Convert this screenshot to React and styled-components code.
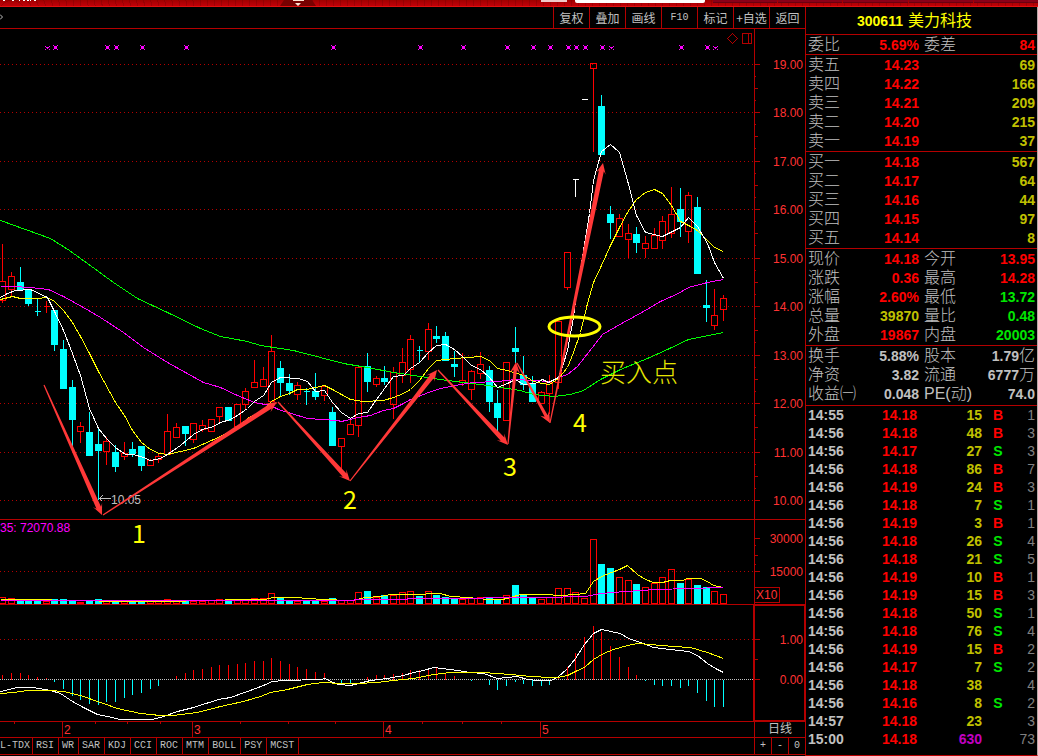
import React, { useState } from 'react'
import styled, { createGlobalStyle } from 'styled-components'

const LINE = '#b40000'
const UP = '#ff0000'
const DOWN = '#00ffff'
const GRAY = '#c0c0c0'
const YELLOW = '#ffff00'
const PINK = '#ff00ff'
const LIME = '#00ff00'

// [up/down/white, body top, body bottom, high, low, volume top, macd bar end]
const candles = [
  ['u', 281, 301, 243, 302, 597, 674],
  ['u', 276, 290, 271, 296, 598, 672],
  ['d', 282, 290, 266, 290, 601, 672],
  ['d', 289, 304, 289, 305, 601, 674],
  ['d', 311, 312, 298, 315, 601, 676],
  ['u', 306, 307, 300, 312, 601, 677],
  ['d', 310, 345, 310, 350, 599, 681],
  ['d', 349, 389, 339, 389, 599, 688],
  ['d', 387, 420, 379, 447, 600, 695],
  ['u', 426, 432, 421, 442, 602, 699],
  ['d', 432, 456, 411, 456, 600, 703],
  ['d', 444, 451, 428, 499, 599, 704],
  ['u', 441, 452, 436, 464, 601, 701],
  ['d', 452, 467, 444, 471, 600, 701],
  ['u', 453, 457, 441, 459, 601, 697],
  ['d', 449, 454, 441, 456, 600, 694],
  ['d', 446, 466, 446, 470, 601, 692],
  ['u', 460, 466, 458, 466, 601, 688],
  ['u', 456, 460, 452, 462, 601, 685],
  ['u', 431, 455, 413, 455, 599, 679],
  ['u', 427, 438, 422, 438, 601, 675],
  ['d', 426, 434, 426, 445, 600, 672],
  ['u', 423, 440, 422, 442, 601, 669],
  ['u', 425, 430, 419, 431, 601, 668],
  ['u', 419, 432, 419, 432, 600, 666],
  ['u', 407, 417, 407, 422, 599, 664],
  ['d', 407, 421, 407, 421, 600, 664],
  ['u', 404, 427, 403, 427, 599, 663],
  ['u', 391, 405, 387, 408, 599, 662],
  ['u', 382, 388, 359, 388, 598, 660],
  ['u', 379, 387, 366, 387, 598, 660],
  ['u', 351, 402, 334, 402, 593, 657],
  ['d', 368, 383, 360, 395, 598, 660],
  ['d', 383, 391, 373, 394, 600, 663],
  ['u', 385, 395, 381, 399, 601, 666],
  ['d', 391, 392, 387, 404, 600, 668],
  ['d', 391, 397, 372, 399, 600, 671],
  ['u', 386, 396, 384, 400, 601, 672],
  ['d', 412, 446, 406, 446, 598, 679],
  ['u', 438, 447, 438, 468, 600, 682],
  ['u', 424, 435, 419, 435, 600, 683],
  ['u', 367, 426, 367, 436, 592, 678],
  ['d', 366, 382, 352, 391, 591, 676],
  ['u', 378, 385, 375, 386, 597, 674],
  ['d', 378, 382, 365, 384, 595, 674],
  ['u', 372, 405, 366, 418, 595, 673],
  ['u', 362, 376, 347, 382, 592, 672],
  ['u', 339, 370, 334, 382, 591, 669],
  ['d', 350, 351, 345, 362, 596, 669],
  ['u', 329, 352, 322, 359, 591, 667],
  ['d', 336, 339, 325, 342, 595, 667],
  ['d', 336, 361, 331, 361, 597, 673],
  ['d', 364, 367, 350, 376, 598, 675],
  ['u', 380, 383, 352, 385, 599, 679],
  ['u', 371, 390, 369, 399, 598, 680],
  ['u', 364, 374, 351, 378, 597, 679],
  ['d', 370, 402, 365, 411, 598, 684],
  ['d', 403, 418, 389, 433, 599, 689],
  ['u', 362, 421, 362, 421, 595, 685],
  ['d', 348, 352, 326, 362, 585, 681],
  ['d', 375, 385, 355, 389, 595, 683],
  ['d', 383, 402, 375, 402, 598, 685],
  ['u', 392, 404, 390, 404, 599, 685],
  ['u', 382, 394, 374, 413, 597, 684],
  ['u', 321, 383, 321, 388, 588, 677],
  ['u', 252, 288, 252, 289, 588, 666],
  ['w', 179, 180, 179, 196, 592, 652],
  ['w', 99, 100, 99, 100, 598, 636],
  ['u', 63, 69, 63, 151, 539, 625],
  ['d', 106, 155, 94, 155, 564, 631],
  ['d', 214, 223, 205, 238, 568, 645],
  ['u', 218, 237, 213, 237, 577, 656],
  ['u', 233, 240, 223, 257, 580, 666],
  ['d', 234, 243, 226, 252, 584, 674],
  ['u', 243, 249, 235, 257, 587, 680],
  ['u', 235, 249, 227, 249, 583, 684],
  ['u', 221, 241, 215, 248, 577, 685],
  ['u', 214, 234, 186, 237, 569, 685],
  ['d', 209, 222, 187, 236, 583, 687],
  ['u', 195, 232, 191, 242, 579, 685],
  ['d', 207, 274, 196, 274, 585, 692],
  ['d', 305, 308, 279, 321, 587, 700],
  ['u', 315, 326, 288, 329, 591, 706],
  ['u', 298, 310, 294, 320, 594, 706],
]

const xOf = (i) => Math.floor(2.64 + 8.686 * i)

const ma5 = '0,297 7,293 15,290 30,289 47,297 54,311 63,330 72,353 80,375 89,408 98,428 106,438 115,447 125,454 133,454 143,457 150,460 160,458 167,454 180,445 193,434 202,429 213,426 220,422 230,419 237,415 247,408 254,401 263,395 271,382 280,377 298,378 307,381 315,391 324,390 332,402 341,412 350,418 358,413 367,412 376,399 393,376 403,375 410,368 419,362 428,352 436,345 445,344 454,349 462,356 471,365 480,369 489,377 497,387 507,383 515,379 523,384 535,383 542,379 548,382 558,377 563,363 567,350 573,317 575,300 583,250 589,213 593,180 601,151 610,144 619,152 627,180 636,215 645,232 662,236 680,227 688,217 697,226 707,243 714,262 723,278'
const ma10 = '0,299 12,296 20,298 37,298 47,297 54,301 63,310 72,322 80,336 89,353 98,371 115,402 124,415 132,430 141,442 150,449 159,453 167,454 193,448 211,440 228,432 237,427 247,418 263,410 271,401 280,396 289,393 297,389 306,389 324,385 332,389 350,399 363,401 383,400 393,397 403,393 410,389 419,380 428,368 436,360 454,358 480,356 489,360 497,368 507,370 520,374 527,377 533,381 542,383 549,384 558,378 567,367 573,352 580,332 587,303 593,282 601,265 610,245 619,227 627,212 636,199 645,192 654,189 662,193 671,205 680,221 688,225 697,230 707,240 714,247 723,251'
const ma30 = '0,286 12,286 30,287 48,289 63,296 83,307 100,317 123,332 143,347 167,362 203,382 220,387 237,395 254,402 270,405 278,409 307,418 337,420 341,421 358,417 370,415 383,410 393,408 403,403 410,399 428,392 440,388 460,384 473,382 497,381 515,379 550,381 558,377 567,374 577,366 588,352 602,334 623,322 643,311 660,301 678,293 688,287 707,282 723,279'
const ma60 = '0,220 50,238 69,250 87,263 113,282 137,298 167,312 200,328 220,336 247,341 260,345 280,348 293,350 320,357 343,363 367,367 393,372 420,376 447,380 480,384 500,387 520,390 533,394 553,396 570,394 583,390 600,379 620,369 647,358 667,349 688,339 723,332'
const vol5 = '0,599 42,599 60,600 135,601 172,601 200,600 250,599 265,599 272,597 293,597 310,598 320,599 352,600 365,597 380,596 390,594 423,594 428,593 440,593 450,596 468,597 487,599 502,599 510,597 520,594 545,594 560,595 575,594 585,593 593,581 601,576 611,572 619,569 627,565 637,574 645,579 653,582 662,582 670,580 682,580 687,578 700,578 707,581 713,585 723,587'
const vol35 = '0,600 353,600 355,599 406,599 408,598 480,598 485,597 540,597 585,596 600,593 625,591 655,589 690,588 723,587'
const dif = '0,691 17,687 32,687 50,690 60,693 72,701 83,707 97,714 107,716 120,719 152,719 163,716 177,711 193,707 218,699 230,697 247,691 263,685 272,681 283,680 320,679 325,678 330,681 338,684 350,685 358,683 370,680 387,678 403,675 413,672 423,670 433,667 450,669 470,672 483,673 497,678 507,677 517,676 527,679 537,680 550,680 557,677 567,668 575,658 584,644 593,633 601,629 620,633 628,638 640,642 653,647 670,649 688,651 697,655 707,663 715,668 723,672'
const dea = '0,693 13,692 27,690 50,690 63,691 80,695 100,702 117,708 140,713 160,715 173,715 197,712 220,706 243,701 260,696 270,692 287,689 307,684 323,682 340,683 357,683 377,682 393,680 413,678 433,674 450,672 483,672 510,674 530,676 550,677 557,677 567,675 575,671 584,667 593,659 603,653 613,649 627,645 637,643 650,644 673,646 690,647 707,652 723,658'

const arrows = [
  [44, 385, 102, 515],
  [103, 515, 277, 402],
  [278, 402, 350, 481],
  [350, 481, 437, 370],
  [438, 370, 508, 445],
  [508, 444, 516, 362],
  [517, 363, 550, 423],
  [550, 423, 603, 163],
]

const marks = [55, 107, 116, 142, 186, 333, 420, 463, 507, 533, 550, 568, 576, 585, 602, 681, 707]
const smallMarks = [47, 611, 715]

const priceLevels = [64, 112, 161, 209, 258, 306, 355, 403, 452, 500]

const tools = ['复权', '叠加', '画线', 'F10', '标记', '+自选', '返回']
const indicators = ['L-TDX', 'RSI', 'WR', 'SAR', 'KDJ', 'CCI', 'ROC', 'MTM', 'BOLL', 'PSY', 'MCST']

const sells = [
  ['卖五', '14.23', '69'],
  ['卖四', '14.22', '166'],
  ['卖三', '14.21', '209'],
  ['卖二', '14.20', '215'],
  ['卖一', '14.19', '37'],
]
const buys = [
  ['买一', '14.18', '567'],
  ['买二', '14.17', '64'],
  ['买三', '14.16', '44'],
  ['买四', '14.15', '97'],
  ['买五', '14.14', '8'],
]
const quotes = [
  ['现价', '14.18', 'red', '今开', '13.95', 'red'],
  ['涨跌', '0.36', 'red', '最高', '14.28', 'red'],
  ['涨幅', '2.60%', 'red', '最低', '13.72', 'green'],
  ['总量', '39870', 'gold', '量比', '0.48', 'green'],
  ['外盘', '19867', 'red', '内盘', '20003', 'green'],
]
const facts = [
  ['换手', '5.88%', 'gray', '股本', '1.79', 'gray', '亿'],
  ['净资', '3.82', 'gray', '流通', '6777', 'gray', '万'],
  ['收益㈠', '0.048', 'gray', 'PE(动)', '74.0', 'gray'],
]
const ticks = [
  ['14:55', '14.18', '15', 'B', '1'],
  ['14:56', '14.18', '48', 'B', '3'],
  ['14:56', '14.17', '27', 'S', '3'],
  ['14:56', '14.18', '86', 'B', '7'],
  ['14:56', '14.19', '24', 'B', '3'],
  ['14:56', '14.18', '7', 'S', '1'],
  ['14:56', '14.19', '3', 'B', '1'],
  ['14:56', '14.18', '26', 'S', '4'],
  ['14:56', '14.18', '21', 'S', '5'],
  ['14:56', '14.19', '10', 'B', '1'],
  ['14:56', '14.19', '15', 'B', '3'],
  ['14:56', '14.18', '50', 'S', '1'],
  ['14:56', '14.18', '76', 'S', '4'],
  ['14:56', '14.19', '15', 'B', '2'],
  ['14:56', '14.17', '7', 'S', '2'],
  ['14:56', '14.18', '38', '', '4'],
  ['14:56', '14.16', '8', 'S', '2'],
  ['14:57', '14.18', '23', '', '3'],
  ['15:00', '14.18', '630', '', '73'],
]

const tones = { red: '#ff0000', green: '#00e600', gold: '#c0c000', gray: GRAY, dim: '#808080', purple: '#c000c0' }

const GlobalStyle = createGlobalStyle`
  * { box-sizing: border-box; }
  body {
    margin: 0;
    background: #000;
    color: ${GRAY};
    font-family: "Liberation Sans", "Noto Sans CJK SC", sans-serif;
    font-size: 12px;
  }
`

const Page = styled.div`
  display: flex;
  flex-direction: column;
  min-height: 100vh;
`

const TitleStrip = styled.header`
  display: flex;
  height: 7px;
  overflow: hidden;
  background: repeating-radial-gradient(circle at 12px 14px, transparent 0 6px, rgba(90, 0, 0, .25) 6px 7px), linear-gradient(#a00000, #c00008);
  border-bottom: 1px solid #e01010;
`

const TitleScrap = styled.svg`
  display: block;
  flex: none;
  width: 320px;
  height: 6px;
`

const PinkBox = styled.div`
  width: 26px;
  height: 2px;
  margin-left: 221px;
  background: #f0c8c8;
`

const SearchBox = styled.div`
  width: 130px;
  height: 3px;
  margin-left: 8px;
  border-radius: 0 0 2px 2px;
  background: #fff;
`

const TitleTabs = styled.div`
  display: flex;
  flex: 1;
  gap: 1px;
  height: 3px;
  margin-left: 8px;
`

const TitleTab = styled.div`
  flex: 1;
  background: #8a0018;
  border-bottom: 1px solid #6a0010;
`

const Body = styled.div`
  display: flex;
  flex: 1;
`

const ChartColumn = styled.main`
  display: flex;
  flex: 1;
  flex-direction: column;
  min-width: 0;
`

const Toolbar = styled.div`
  display: flex;
  align-items: stretch;
  height: 22px;
  border-bottom: 1px solid ${LINE};
`

const ToolbarLead = styled.div`
  flex: 1;
  svg { display: block; margin-top: 7px; }
`

const ToolButton = styled.button`
  width: 36px;
  padding: 0;
  border: 0;
  border-left: 1px solid ${LINE};
  background: none;
  color: ${GRAY};
  font-family: ${(p) => (p.$mono ? '"Liberation Mono", monospace' : '"Noto Sans CJK SC", sans-serif')};
  font-size: ${(p) => (p.$mono ? '10px' : '12px')};
  line-height: 20px;
  white-space: nowrap;
  cursor: pointer;
`

const Pane = styled.div`
  display: flex;
  border-bottom: 1px solid ${LINE};
`

const Plot = styled.svg`
  display: block;
  flex: 1;
  min-width: 0;
  height: ${(p) => p.$h}px;
  overflow: visible;
`

const Axis = styled.div`
  flex: none;
  width: 51px;
  border-left: 1px solid ${LINE};
  outline: ${(p) => (p.$active ? `2px solid ${LINE}` : 'none')};
  outline-offset: -1px;
  svg { display: block; }
`

const PeriodButton = styled.button`
  flex: none;
  width: 51px;
  height: 15px;
  padding: 0;
  border: 0;
  border-left: 1px solid ${LINE};
  background: none;
  color: ${GRAY};
  font: 12px/15px "Liberation Sans", "Noto Sans CJK SC", sans-serif;
`

const TabBar = styled.div`
  display: flex;
  height: 17px;
  border-bottom: 1px solid ${LINE};
`

const Tab = styled.button`
  padding: 0 4px 0 3px;
  border: 0;
  border-right: 1px solid ${LINE};
  background: none;
  color: ${GRAY};
  font: 10px/16px "Liberation Mono", monospace;
  cursor: pointer;

  &:first-child {
    padding: 0 2px 0 0;
  }
`

const ZoomGroup = styled.div`
  display: flex;
  width: 51px;
  margin-left: auto;
`

const ZoomButton = styled.button`
  flex: 1;
  padding: 0;
  border: 0;
  border-left: 1px solid ${LINE};
  background: none;
  color: ${GRAY};
  font: 10px/16px "Liberation Mono", monospace;
`

const SidePanel = styled.aside`
  flex: none;
  width: 233px;
  border-left: 1px solid ${LINE};
  border-right: 1px solid #b8a8a8;
  border-bottom: 1px solid ${LINE};
`

const StockTitle = styled.h1`
  height: 28px;
  margin: 0;
  padding-right: 14px;
  border-bottom: 1px solid ${LINE};
  color: ${YELLOW};
  font-size: 14px;
  font-weight: 700;
  line-height: 27px;
  text-align: center;

  span {
    margin-left: 5px;
    font-size: 16px;
    font-weight: 400;
  }
`

const Section = styled.section`
  padding: 0 2px ${(p) => p.$pad || 0}px 2px;
  border-bottom: ${(p) => (p.$last ? '0' : `1px solid ${LINE}`)};
`

const DataTable = styled.table`
  width: 100%;
  border-collapse: collapse;
  table-layout: fixed;
`

const Label = styled.th`
  width: ${(p) => p.$w || 'auto'};
  height: 19px;
  padding: 0 0 0 ${(p) => p.$pad || 0}px;
  font: 300 16px/18px "Liberation Sans", "Noto Sans CJK SC", sans-serif;
  text-align: left;
  white-space: nowrap;
`

const Value = styled.td`
  width: ${(p) => p.$w || 'auto'};
  height: ${(p) => p.$h || 19}px;
  padding: 0;
  color: ${(p) => tones[p.$tone]};
  font-size: 14px;
  font-weight: ${(p) => (p.$light ? 400 : 700)};
  line-height: 16px;
  text-align: ${(p) => p.$align || 'right'};
  white-space: nowrap;

  small {
    font-size: 16px;
    font-weight: 300;
  }
`

// shaft widens towards the head
function Arrow({ from, to }) {
  const dx = to[0] - from[0]
  const dy = to[1] - from[1]
  const len = Math.hypot(dx, dy)
  const ux = dx / len
  const uy = dy / len
  const at = (d, w) => `${from[0] + ux * d - uy * w},${from[1] + uy * d + ux * w}`
  const neck = len - 8
  const half = len < 90 ? 1.7 : 2.5
  const pts = [at(0, 0.6), at(neck, half), at(len - 11, 5), at(len, 0), at(len - 11, -5), at(neck, -half), at(0, -0.6)]
  return <polygon points={pts.join(' ')} fill="#ff3838" />
}

function Candle({ data, x }) {
  const [kind, top, bottom, high, low] = data
  const color = { u: UP, d: DOWN, w: '#ffffff' }[kind]
  const b = bottom - 1
  return (
    <g stroke={color} fill={kind === 'd' ? color : 'none'}>
      {high < top && <path d={`M${x} ${high}V${top}`} />}
      {low > bottom && <path d={`M${x} ${b}V${low}`} />}
      <path d={`M${x - 3} ${top}H${x + 3}V${b}H${x - 3}Z`} />
    </g>
  )
}

function Dots({ y }) {
  return <path d={`M-0.5 ${y}H754`} stroke={LINE} strokeDasharray="1 3" />
}

function PriceChart() {
  return (
    <Plot $h={490} viewBox="0 29 754 490" preserveAspectRatio="xMaxYMin meet" role="img" aria-label="K线图">
      <g transform="translate(.5 .5)" shapeRendering="crispEdges" fill="none">
        {priceLevels.map((y) => <Dots key={y} y={y} />)}
        {marks.map((x) => (
          <path key={x} d={`M${x - 1.5} 45.5h3v3h-3zM${x - 2.5} 44.5h1v1h-1zM${x + 1.5} 44.5h1v1h-1zM${x - 2.5} 48.5h1v1h-1zM${x + 1.5} 48.5h1v1h-1z`} fill={PINK} />
        ))}
        {smallMarks.map((x) => (
          <path key={x} d={`M${x - 0.5} 46.5h1v2h-1zM${x - 2.5} 45.5h1v1h-1zM${x - 1.5} 46.5h3v1h-3zM${x + 1.5} 45.5h1v1h-1zM${x - 2.5} 48.5h1v1h-1zM${x + 1.5} 48.5h1v1h-1z`} fill={PINK} />
        ))}
        <path d="M732 33L737 38L732 43L727 38Z" stroke={LINE} />
        <path d="M742 33H751V43H742ZM748 33V43" stroke={LINE} />
        {candles.map((c, i) => <Candle key={i} data={c} x={xOf(i)} />)}
        <polyline points={ma60} stroke={LIME} />
        <polyline points={ma30} stroke={PINK} />
        <polyline points={ma10} stroke={YELLOW} />
        <polyline points={ma5} stroke="#fff" />
        <path d="M99 498H110M99 498L102 495M99 498L102 501" stroke={GRAY} />
      </g>
      <text x="111" y="504" fill={GRAY} fontSize="12">10.05</text>
      {arrows.map((a) => <Arrow key={a.join()} from={[a[0], a[1]]} to={[a[2], a[3]]} />)}
      <ellipse cx="574.5" cy="326.5" rx="25.5" ry="9.5" fill="none" stroke={YELLOW} strokeWidth="3" />
      <g fill={YELLOW} fontFamily='"Noto Sans CJK SC", sans-serif' fontSize="25">
        <text x="343" y="509">2</text>
        <text x="503" y="476">3</text>
        <text x="573" y="432">4</text>
        <text x="600" y="382" fontSize="26" fontWeight="300" fill="#e6e600">买入点</text>
      </g>
    </Plot>
  )
}

function PriceAxis() {
  const minor = priceLevels.slice(0, 9).map((y) => `M0 ${y}h5M0 ${y + 12}h1M0 ${y + 24}h3M0 ${y + 36}h1`).join('')
  return (
    <Axis>
      <svg width="50" height="490" viewBox="0 29 50 490">
        <path d={minor + 'M0 500h5'} stroke={LINE} transform="translate(0 .5)" shapeRendering="crispEdges" />
        {priceLevels.map((y, i) => (
          <text key={y} x="48" y={y + 5} textAnchor="end" fill="#ff3232" fontSize="12">{19 - i}.00</text>
        ))}
      </svg>
    </Axis>
  )
}

function VolumeChart() {
  return (
    <Plot $h={84} viewBox="0 520 754 84" preserveAspectRatio="xMaxYMin meet" role="img" aria-label="成交量">
      <g transform="translate(.5 .5)" shapeRendering="crispEdges" fill="none">
        <Dots y={571} />
        {candles.map(([kind, , , , , v], i) => {
          const x = xOf(i)
          const color = kind === 'd' ? DOWN : UP
          return <path key={i} d={`M${x - 3} ${v}H${x + 3}V603H${x - 3}Z`} stroke={color} fill={kind === 'd' ? color : 'none'} />
        })}
        <polyline points={vol5} stroke={YELLOW} />
        <polyline points={vol35} stroke={PINK} />
      </g>
      <text x="0" y="532" fill={PINK} fontSize="12">35: 72070.88</text>
      <text x="132" y="543" fill={YELLOW} fontSize="25" fontFamily='"Noto Sans CJK SC", sans-serif'>1</text>
    </Plot>
  )
}

function MacdChart() {
  return (
    <Plot $h={116} viewBox="0 605 754 116" preserveAspectRatio="xMaxYMin meet" role="img" aria-label="MACD">
      <g transform="translate(.5 .5)" shapeRendering="crispEdges" fill="none">
        <Dots y={639} />
        {candles.map((c, i) => c[6] !== 679 && (
          <path key={i} d={`M${xOf(i)} 679V${c[6]}`} stroke={c[6] > 679 ? DOWN : UP} />
        ))}
        <path d="M-0.5 679H754" stroke={GRAY} strokeDasharray="1 1" />
        <polyline points={dif} stroke="#fff" />
        <polyline points={dea} stroke={YELLOW} />
      </g>
    </Plot>
  )
}

function DateScale() {
  return (
    <Plot $h={15} viewBox="0 722 754 15" preserveAspectRatio="xMaxYMin meet" role="img" aria-label="月份">
      <path
        d="M62 722v15M192 722v15M383 722v15M540 722v15M14 722v2M95 722v2M127 722v2M160 722v2M240 722v2M288 722v2M335 722v2M422 722v2M462 722v2M501 722v2"
        stroke={LINE}
        transform="translate(.5 0)"
        shapeRendering="crispEdges"
      />
      <g fill="#ff3232" fontSize="12">
        <text x="64" y="734">2</text>
        <text x="194" y="734">3</text>
        <text x="385" y="734">4</text>
        <text x="542" y="734">5</text>
      </g>
    </Plot>
  )
}

function QuoteTable({ rows }) {
  return (
    <DataTable>
      <tbody>
        {rows.map(([l1, v1, t1, l2, v2, t2, unit]) => (
          <tr key={l1}>
            <Label $w="50px">{l1}</Label>
            <Value $w="61px" $tone={t1}>{v1}</Value>
            <Label $w="50px" $pad={5}>{l2}</Label>
            <Value $tone={t2}>{v2}{unit && <small>{unit}</small>}</Value>
          </tr>
        ))}
      </tbody>
    </DataTable>
  )
}

function BookTable({ rows }) {
  return (
    <DataTable>
      <tbody>
        {rows.map(([name, price, vol]) => (
          <tr key={name}>
            <Label $w="50px">{name}</Label>
            <Value $w="61px" $tone="red">{price}</Value>
            <Value $tone="gold">{vol}</Value>
          </tr>
        ))}
      </tbody>
    </DataTable>
  )
}

function TickTable() {
  return (
    <DataTable>
      <tbody>
        {ticks.map(([time, price, vol, side, count], i) => (
          <tr key={i}>
            <Value $h={18} $w="50px" $tone="gray" $align="left">{time}</Value>
            <Value $h={18} $w="59px" $tone="red">{price}</Value>
            <Value $h={18} $w="65px" $tone={vol === '630' ? 'purple' : 'gold'}>{vol}</Value>
            <Value $h={18} $w="32px" $tone={side === 'B' ? 'red' : 'green'} $align="center">{side}</Value>
            <Value $h={18} $tone="dim" $light>{count}</Value>
          </tr>
        ))}
      </tbody>
    </DataTable>
  )
}

function App() {
  const [indicator, setIndicator] = useState('')

  return (
    <Page>
      <GlobalStyle />
      <TitleStrip>
        <TitleScrap viewBox="0 0 320 6">
          <path d="M3 0h2v1h-2zM12 0h2v1h-2zM19 0h1v1h-1zM23 0h2v1h-2zM27 0h2v1h-2zM30 0h1v1h-1zM34 0h2v1h-2z" fill="#fff" />
          <path d="M280 6L284 0H312L316 6Z" fill="#780000" />
          <path d="M293 0h11v1h-11zM295 3h6l-3 3z" fill="#ffe0d0" />
        </TitleScrap>
        <PinkBox />
        <SearchBox />
        <TitleTabs>
          <TitleTab /><TitleTab /><TitleTab /><TitleTab /><TitleTab />
        </TitleTabs>
      </TitleStrip>
      <Body>
        <ChartColumn>
          <Toolbar>
            <ToolbarLead>
              <svg width="4" height="6" viewBox="0 0 4 6">
                <path d="M0 .5L2.5 3L0 5.5" stroke={GRAY} fill="none" />
              </svg>
            </ToolbarLead>
            {tools.map((t) => <ToolButton key={t} $mono={t === 'F10'}>{t}</ToolButton>)}
          </Toolbar>
          <Pane>
            <PriceChart />
            <PriceAxis />
          </Pane>
          <Pane>
            <VolumeChart />
            <Axis>
              <svg width="50" height="84" viewBox="0 520 50 84">
                <path d="M0 538.5h5M0 545.5h1M0 555.5h3M0 564.5h1M0 571.5h5M0 587.5H24.5V602.5H0" stroke={LINE} fill="none" shapeRendering="crispEdges" />
                <g fill="#ff3232" fontSize="12">
                  <text x="48" y="543" textAnchor="end">30000</text>
                  <text x="48" y="576" textAnchor="end">15000</text>
                  <text x="1" y="599">X10</text>
                </g>
              </svg>
            </Axis>
          </Pane>
          <Pane>
            <MacdChart />
            <Axis $active>
              <svg width="50" height="116" viewBox="0 605 50 116">
                <path d="M0 639.5h5M0 659.5h3M0 679.5h5" stroke={LINE} shapeRendering="crispEdges" />
                <g fill="#ff3232" fontSize="12">
                  <text x="48" y="644" textAnchor="end">1.00</text>
                  <text x="48" y="684" textAnchor="end">0.00</text>
                </g>
              </svg>
            </Axis>
          </Pane>
          <Pane>
            <DateScale />
            <PeriodButton>日线</PeriodButton>
          </Pane>
          <TabBar>
            {indicators.map((name) => (
              <Tab key={name} aria-pressed={indicator === name} onClick={() => setIndicator(name)}>{name}</Tab>
            ))}
            <ZoomGroup>
              <ZoomButton>+</ZoomButton>
              <ZoomButton>-</ZoomButton>
              <ZoomButton>0</ZoomButton>
            </ZoomGroup>
          </TabBar>
        </ChartColumn>
        <SidePanel>
          <StockTitle>300611<span>美力科技</span></StockTitle>
          <Section><QuoteTable rows={[['委比', '5.69%', 'red', '委差', '84', 'red']]} /></Section>
          <Section $pad={1}><BookTable rows={sells} /></Section>
          <Section $pad={1}><BookTable rows={buys} /></Section>
          <Section $pad={1}><QuoteTable rows={quotes} /></Section>
          <Section $pad={2}><QuoteTable rows={facts} /></Section>
          <Section $last><TickTable /></Section>
        </SidePanel>
      </Body>
    </Page>
  )
}

export default App
